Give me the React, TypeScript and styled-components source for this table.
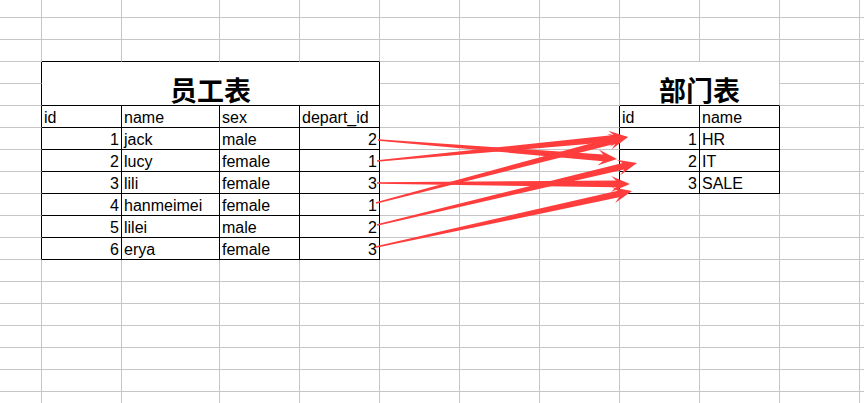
import React from 'react';
import styled, { createGlobalStyle } from 'styled-components';

const GRID_LINE = '#c6c6c6';
const BLACK = '#000';
const ARROW_RED = '#ff3d3d';

const COL_WIDTHS = [42, 80, 98, 80, 80, 80, 80, 80, 80, 80, 80, 4];
const ROW_COUNT = 19;
const ROW_HEIGHTS = [18, ...Array(ROW_COUNT - 1).fill(22)];

type Box = { r0: number; r1: number; c0: number; c1: number };

// bordered tables (black lines)
const TABLES: Box[] = [
  { r0: 3, r1: 11, c0: 1, c1: 4 },
  { r0: 5, r1: 8, c0: 8, c1: 9 },
];

type Merge = Box & { title: string };

const MERGES: Merge[] = [
  { r0: 3, r1: 4, c0: 1, c1: 4, title: '员工表' },
  { r0: 3, r1: 4, c0: 8, c1: 9, title: '部门表' },
];

const employees = [
  [1, 'jack', 'male', 2],
  [2, 'lucy', 'female', 1],
  [3, 'lili', 'female', 3],
  [4, 'hanmeimei', 'female', 1],
  [5, 'lilei', 'male', 2],
  [6, 'erya', 'female', 3],
];

const departs = [
  [1, 'HR'],
  [2, 'IT'],
  [3, 'SALE'],
];

// cell contents, keyed "row,col"
const contents: Record<string, string | number> = {};
['id', 'name', 'sex', 'depart_id'].forEach((h, i) => (contents[`5,${i + 1}`] = h));
contents['5,8'] = 'id';
contents['5,9'] = 'name';
employees.forEach((row, i) => row.forEach((v, j) => (contents[`${6 + i},${1 + j}`] = v)));
departs.forEach((row, i) => row.forEach((v, j) => (contents[`${6 + i},${8 + j}`] = v)));

const inBox = (b: Box, r: number, c: number) => r >= b.r0 && r <= b.r1 && c >= b.c0 && c <= b.c1;
const inTable = (r: number, c: number) => TABLES.some((t) => inBox(t, r, c));
const inMerge = (r: number, c: number) => MERGES.some((m) => inBox(m, r, c));

const arrows = [
  { from: [378, 140], to: [617, 159] },
  { from: [377, 161], to: [628, 137] },
  { from: [377, 183], to: [630, 184] },
  { from: [376, 203], to: [628, 137] },
  { from: [377, 225], to: [637, 163] },
  { from: [376, 247], to: [632, 191] },
];

const GlobalStyle = createGlobalStyle`
  html, body {
    margin: 0;
    padding: 0;
    background: #fff;
  }
  body {
    font-family: "Liberation Sans", Arial, sans-serif;
  }
`;

const Sheet = styled.div`
  position: relative;
  width: 864px;
  height: 403px;
  overflow: hidden;
  background: #fff;
`;

const Grid = styled.div`
  display: grid;
  grid-template-columns: ${COL_WIDTHS.map((w) => `${w}px`).join(' ')};
  grid-template-rows: ${ROW_HEIGHTS.map((h) => `${h}px`).join(' ')};
`;

const Cell = styled.div<{ $row: number; $col: number; $right: string; $bottom: string; $num: boolean }>`
  grid-row: ${(p) => p.$row + 1};
  grid-column: ${(p) => p.$col + 1};
  box-sizing: border-box;
  border-right: 1px solid ${(p) => p.$right};
  border-bottom: 1px solid ${(p) => p.$bottom};
  padding: 2px 2px 0 2px;
  font-size: 16px;
  line-height: 20px;
  color: #000;
  text-align: ${(p) => (p.$num ? 'right' : 'left')};
  white-space: nowrap;
  overflow: hidden;
`;

const TitleCell = styled.div<{ $box: Box; $right: string; $bottom: string }>`
  grid-row: ${(p) => `${p.$box.r0 + 1} / ${p.$box.r1 + 2}`};
  grid-column: ${(p) => `${p.$box.c0 + 1} / ${p.$box.c1 + 2}`};
  box-sizing: border-box;
  border-right: 1px solid ${(p) => p.$right};
  border-bottom: 1px solid ${(p) => p.$bottom};
  display: flex;
  align-items: flex-end;
  justify-content: center;
  font-family: "Noto Sans CJK SC", sans-serif;
  font-weight: 700;
  font-size: 27px;
  line-height: 31px;
  color: #000;
`;

const ArrowLayer = styled.svg`
  position: absolute;
  left: 0;
  top: 0;
  pointer-events: none;
`;

function Arrow({ from, to }: { from: number[]; to: number[] }) {
  const [x0, y0] = from;
  const [x1, y1] = to;
  const L = Math.hypot(x1 - x0, y1 - y0);
  const ux = (x1 - x0) / L;
  const uy = (y1 - y0) / L;
  const nx = -uy;
  const ny = ux;
  const pt = (d: number, w: number) => `${(x0 + ux * d + nx * w).toFixed(2)},${(y0 + uy * d + ny * w).toFixed(2)}`;
  const pts = [
    pt(0, -0.8),
    pt(L - 14, -3.4),
    pt(L - 19, -8),
    pt(L, 0),
    pt(L - 19, 8),
    pt(L - 14, 3.4),
    pt(0, 0.8),
  ];
  return <polygon points={pts.join(' ')} fill={ARROW_RED} />;
}

export default function App() {
  const cells: React.ReactNode[] = [];

  for (let r = 0; r < ROW_COUNT; r++) {
    for (let c = 0; c < COL_WIDTHS.length; c++) {
      if (inMerge(r, c)) continue;
      const own = inTable(r, c);
      const right = own || inTable(r, c + 1) ? BLACK : GRID_LINE;
      const bottom = own || inTable(r + 1, c) ? BLACK : GRID_LINE;
      const v = contents[`${r},${c}`];
      cells.push(
        <Cell key={`${r}-${c}`} $row={r} $col={c} $right={right} $bottom={bottom} $num={typeof v === 'number'}>
          {v}
        </Cell>
      );
    }
  }

  MERGES.forEach((m) => {
    const own = inTable(m.r0, m.c0);
    const right = own || inTable(m.r0, m.c1 + 1) ? BLACK : GRID_LINE;
    const bottom = own || inTable(m.r1 + 1, m.c0) ? BLACK : GRID_LINE;
    cells.push(
      <TitleCell key={m.title} $box={m} $right={right} $bottom={bottom}>
        {m.title}
      </TitleCell>
    );
  });

  return (
    <>
      <GlobalStyle />
      <Sheet>
        <Grid>{cells}</Grid>
        <ArrowLayer width={864} height={403} viewBox="0 0 864 403">
          {arrows.map((a, i) => (
            <Arrow key={i} from={a.from} to={a.to} />
          ))}
        </ArrowLayer>
      </Sheet>
    </>
  );
}
